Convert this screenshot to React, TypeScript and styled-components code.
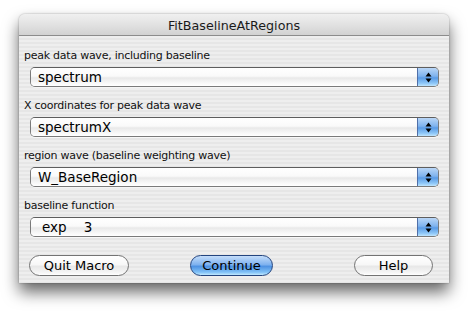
import styled, { createGlobalStyle } from 'styled-components';

const GlobalStyle = createGlobalStyle`
  html, body {
    margin: 0;
    padding: 0;
    background: #ffffff;
  }
  body {
    font-family: "DejaVu Sans", "Liberation Sans", sans-serif;
  }
`;

const fields = [
  { label: 'peak data wave, including baseline', value: 'spectrum' },
  { label: 'X coordinates for peak data wave', value: 'spectrumX' },
  { label: 'region wave (baseline weighting wave)', value: 'W_BaseRegion' },
  { label: 'baseline function', value: 'exp\u00a0\u00a0\u00a0\u00a03', indent: true },
];

const Page = styled.div`
  width: 470px;
  height: 313px;
  padding: 14px 0 0 19px;
  box-sizing: border-box;
`;

const Window = styled.div`
  width: 430px;
  height: 269px;
  border-radius: 6px 6px 0 0;
  background: #ededed;
  box-shadow: 0 9px 16px rgba(0, 0, 0, 0.6), 0 0 2px rgba(0, 0, 0, 0.35);
  display: flex;
  flex-direction: column;
  overflow: hidden;
`;

const TitleBar = styled.div`
  height: 22px;
  flex: none;
  display: flex;
  align-items: center;
  justify-content: center;
  background: linear-gradient(to bottom, #f0f0f0 0%, #e2e2e2 50%, #d2d2d2 100%);
  border-bottom: 1px solid #8c8c8c;
  font-size: 12.7px;
  color: #1a1a1a;
  padding-top: 1px;
  box-sizing: border-box;
`;

const Body = styled.div`
  flex: 1;
  padding: 9px 10px 0 5px;
  background: repeating-linear-gradient(
    to bottom,
    #eeeeee 0px,
    #eeeeee 2px,
    #e6e6e6 2px,
    #e6e6e6 4px
  );
  display: flex;
  flex-direction: column;
`;

const Field = styled.div`
  display: flex;
  flex-direction: column;
  height: 50px;
`;

const Label = styled.div`
  height: 17px;
  padding-top: 2px;
  box-sizing: border-box;
  line-height: 17px;
  font-size: 11px;
  letter-spacing: -0.25px;
  color: #111;
  margin-bottom: 5px;
`;

const Popup = styled.div`
  margin-left: 6px;
  height: 20px;
  display: flex;
  border-radius: 5px;
  border: 1px solid #7a7a7a;
  border-top-color: #5e5e5e;
  overflow: hidden;
  box-sizing: border-box;
  box-shadow: 0 1px 0 rgba(255, 255, 255, 0.6);
`;

const PopupValue = styled.div<{ $indent?: boolean }>`
  flex: 1;
  display: flex;
  align-items: center;
  padding-left: ${({ $indent }) => ($indent ? '11px' : '7px')};
  font-size: 13.5px;
  color: #000;
  background: linear-gradient(
    to bottom,
    #ffffff 0%,
    #fafafa 45%,
    #e9e9e9 55%,
    #f6f6f6 80%,
    #ffffff 100%
  );
`;

const PopupArrow = styled.div`
  width: 20px;
  flex: none;
  border-left: 1px solid #4f6fa8;
  display: flex;
  align-items: center;
  justify-content: center;
  background: linear-gradient(
    to bottom,
    #b9d6f7 0%,
    #7fb3ee 45%,
    #5a9be6 55%,
    #8ec7f7 85%,
    #bfe6ff 100%
  );
`;

const Buttons = styled.div`
  display: flex;
  align-items: center;
  margin-top: 10px;
  padding-left: 5px;
`;

const Button = styled.div<{ $width: number; $gap?: number; $primary?: boolean }>`
  width: ${({ $width }) => $width}px;
  margin-left: ${({ $gap }) => $gap ?? 0}px;
  height: 21px;
  box-sizing: border-box;
  border-radius: 11px;
  border: 1px solid ${({ $primary }) => ($primary ? '#24457f' : '#737373')};
  display: flex;
  align-items: center;
  justify-content: center;
  font-size: 13px;
  color: #000;
  background: ${({ $primary }) =>
    $primary
      ? 'linear-gradient(to bottom, #c4ddfa 0%, #7fb2ef 45%, #4f93e3 55%, #7fc0f6 85%, #bfe8ff 100%)'
      : 'linear-gradient(to bottom, #ffffff 0%, #f7f7f7 45%, #e8e8e8 55%, #f4f4f4 85%, #ffffff 100%)'};
`;

const Arrows = () => (
  <svg width="7" height="11" viewBox="0 0 7 11">
    <path d="M3.5 0.5 L6.5 4.5 L0.5 4.5 Z" fill="#000" />
    <path d="M0.5 6.5 L6.5 6.5 L3.5 10.5 Z" fill="#000" />
  </svg>
);

export default function App() {
  return (
    <Page>
      <GlobalStyle />
      <Window>
        <TitleBar>FitBaselineAtRegions</TitleBar>
        <Body>
          {fields.map((f) => (
            <Field key={f.label}>
              <Label>{f.label}</Label>
              <Popup>
                <PopupValue $indent={f.indent}>{f.value}</PopupValue>
                <PopupArrow>
                  <Arrows />
                </PopupArrow>
              </Popup>
            </Field>
          ))}
          <Buttons>
            <Button $width={100}>Quit Macro</Button>
            <Button $width={83} $gap={61} $primary>
              Continue
            </Button>
            <Button $width={79} $gap={81}>
              Help
            </Button>
          </Buttons>
        </Body>
      </Window>
    </Page>
  );
}
